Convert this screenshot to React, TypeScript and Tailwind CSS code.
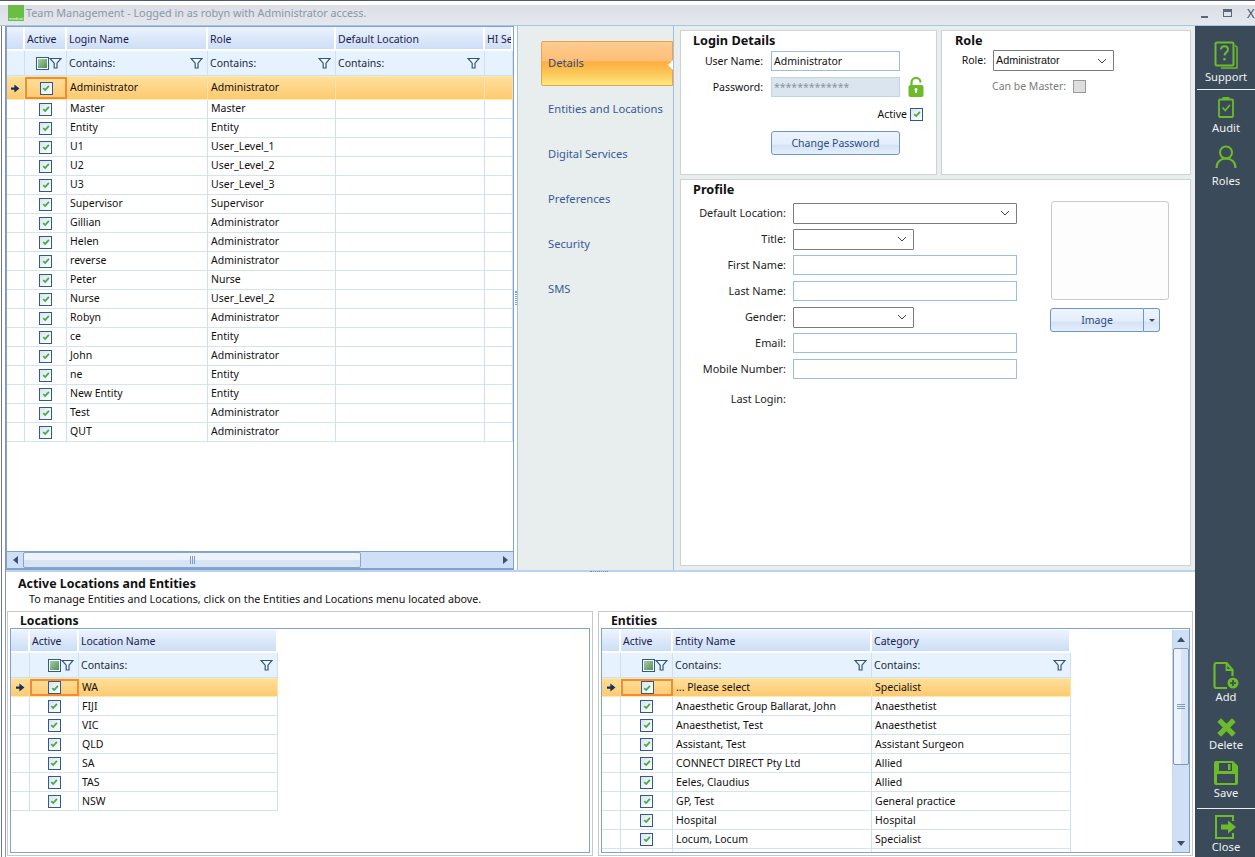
import type { ReactNode } from "react"

type Column = { label: string; width: number; filter?: boolean; tri?: boolean }

const teamColumns: Column[] = [
	{ label: "Active", width: 42, tri: true },
	{ label: "Login Name", width: 141, filter: true },
	{ label: "Role", width: 128, filter: true },
	{ label: "Default Location", width: 149, filter: true },
	{ label: "HI Se", width: 28 },
]

const teamRows = [
	["Administrator", "Administrator"],
	["Master", "Master"],
	["Entity", "Entity"],
	["U1", "User_Level_1"],
	["U2", "User_Level_2"],
	["U3", "User_Level_3"],
	["Supervisor", "Supervisor"],
	["Gillian", "Administrator"],
	["Helen", "Administrator"],
	["reverse", "Administrator"],
	["Peter", "Nurse"],
	["Nurse", "User_Level_2"],
	["Robyn", "Administrator"],
	["ce", "Entity"],
	["John", "Administrator"],
	["ne", "Entity"],
	["New Entity", "Entity"],
	["Test", "Administrator"],
	["QUT", "Administrator"],
]

const locationRows = ["WA", "FIJI", "VIC", "QLD", "SA", "TAS", "NSW"].map((l) => [l])

const entityRows = [
	["... Please select", "Specialist"],
	["Anaesthetic Group Ballarat, John", "Anaesthetist"],
	["Anaesthetist, Test", "Anaesthetist"],
	["Assistant, Test", "Assistant Surgeon"],
	["CONNECT DIRECT Pty Ltd", "Allied"],
	["Eeles, Claudius", "Allied"],
	["GP, Test", "General practice"],
	["Hospital", "Hospital"],
	["Locum, Locum", "Specialist"],
	["", ""],
]

function Funnel({ className = "" }: { className?: string }) {
	return (
		<svg viewBox="0 0 13 12" className={`h-[12px] w-[13px] shrink-0 ${className}`}>
			<path
				d="M1 1.500h11L8 6.200v4.800H5.200V6.200z"
				fill="#f4f8fd"
				stroke="#2f5480"
				strokeWidth="1.200"
			/>
		</svg>
	)
}

function CheckBox() {
	return (
		<span className="flex h-[13px] w-[13px] shrink-0 items-center justify-center border border-[#2f5b8c] bg-gradient-to-br from-[#dde3eb] to-[#ffffff]">
			<svg viewBox="0 0 10 10" className="h-[8px] w-[8px]">
				<path d="M1.500 5.200 4 7.600 8.600 2.400" fill="none" stroke="#3fae49" strokeWidth="2.200" />
			</svg>
		</span>
	)
}

function TriBox() {
	return (
		<span className="flex h-[13px] w-[13px] shrink-0 items-center justify-center border border-[#2f5b8c] bg-white">
			<span className="h-[9px] w-[9px] bg-gradient-to-br from-[#a9cda6] to-[#4f9150]" />
		</span>
	)
}

function Arrow() {
	return (
		<svg viewBox="0 0 8 8" className="h-[9px] w-[9px]">
			<path d="M0 3h3V0.500L7.500 4 3 7.500V5H0z" fill="#17305f" />
		</svg>
	)
}

function Grid({
	columns,
	rows,
	headH,
	headPt,
	filterH,
	firstH,
	indW,
	firstPb,
	rowPb,
}: {
	columns: Column[]
	rows: string[][]
	headH: string
	headPt: string
	filterH: string
	firstH: string
	indW: string
	firstPb: string
	rowPb: string
}) {
	return (
		<div className="flex w-fit shrink-0 flex-col text-[10.500px]">
			<div className={`flex ${headH} shrink-0 bg-gradient-to-b from-[#ecf3fd] to-[#c9dcf6]`}>
				<div className={`${indW} shrink-0 border-r-2 border-b-2 border-white`} />
				{columns.map((c) => (
					<div
						key={c.label}
						style={{ width: c.width }}
						className={`flex shrink-0 items-center overflow-hidden whitespace-nowrap border-r-2 border-b-2 border-white ${headPt} pl-[2px] text-[#201a4d]`}
					>
						{c.label}
					</div>
				))}
			</div>
			<div className={`flex ${filterH} shrink-0 border-b border-[#cfe0f5] bg-[#e6f2fe]`}>
				<div className={`${indW} shrink-0 border-r border-[#cfe0f5]`} />
				{columns.map((c) => (
					<div
						key={c.label}
						style={{ width: c.width }}
						className="flex shrink-0 items-center justify-between border-r border-[#cfe0f5] pr-[4px] pl-[2px] text-[#1c2a40]"
					>
						{c.tri ? (
							<div className="ml-auto flex items-center">
								<TriBox />
								<Funnel />
							</div>
						) : c.filter ? (
							<>
								<span>Contains:</span>
								<Funnel />
							</>
						) : null}
					</div>
				))}
			</div>
			{rows.map((row, i) => (
				<div
					key={i}
					className={`flex shrink-0 ${
						i === 0
							? `${firstH} border-y border-[#fdeaa8] bg-gradient-to-b from-[#fedf9a] to-[#fdca70]`
							: "h-[19px] border-b border-[#d5e2f2]"
					}`}
				>
					<div
						className={`${indW} flex shrink-0 items-center justify-center border-r ${
							i === 0 ? "border-[#fde3a4]" : "border-[#cfe0f5]"
						}`}
					>
						{i === 0 ? <Arrow /> : null}
					</div>
					{columns.map((c, n) => (
						<div
							key={c.label}
							style={{ width: c.width }}
							className={`flex shrink-0 items-center overflow-hidden whitespace-nowrap ${
								n === 0
									? i === 0
										? "justify-center border-2 border-[#f58b30]"
										: "justify-center border-r border-[#cfe0f5]"
									: `border-r ${i === 0 ? firstPb : rowPb} pl-[3px] ${i === 0 ? "border-[#fde3a4]" : "border-[#cfe0f5]"}`
							}`}
						>
							{n === 0 ? row[0] !== "" ? <CheckBox /> : null : row[n - 1]}
						</div>
					))}
				</div>
			))}
		</div>
	)
}

function NavItem({ label, active }: { label: string; active?: boolean }) {
	if (active) {
		return (
			<div className="relative mb-[1px] flex h-[45px] items-center rounded-l-[2px] border border-[#f0a04e] bg-[linear-gradient(#fecb8d_0%,#fdbf78_44%,#fdae3d_46%,#fdc95c_75%,#fdeb80_100%)] pb-[2px] pl-[6px] text-[#2e4a86]">
				{label}
				<span className="absolute top-[18px] -right-[1px] h-0 w-0 border-y-[5px] border-r-[5px] border-y-transparent border-r-white" />
			</div>
		)
	}
	return <div className="flex h-[45px] items-center pb-[2px] pl-[7px] text-[#3a5a96]">{label}</div>
}

function Button({ label, className = "" }: { label: string; className?: string }) {
	return (
		<div
			className={`flex items-center justify-center rounded-[3px] border border-[#6f96c8] bg-[linear-gradient(#edf4fd_0%,#e4eefb_55%,#d3e2f5_60%,#e6effb_100%)] text-[10.500px] text-[#2a4a86] ${className}`}
		>
			{label}
		</div>
	)
}

function Combo({ value, width }: { value?: string; width: string }) {
	return (
		<div className={`flex h-[21px] ${width} items-center justify-between rounded-[1px] border border-[#7c7c7c] bg-white pr-[6px] pl-[2px]`}>
			<span className="font-['Liberation_Sans',sans-serif] text-[10.800px] text-[#111]">{value}</span>
			<svg viewBox="0 0 10 6" className="h-[6px] w-[10px]">
				<path d="M1 1l4 4 4-4" fill="none" stroke="#444" strokeWidth="1" />
			</svg>
		</div>
	)
}

function Field({ label, children }: { label: string; children?: ReactNode }) {
	return (
		<div className="flex h-[26px] items-center">
			<div className="w-[112px] shrink-0 pr-[7px] text-right text-[10.900px] whitespace-nowrap text-[#222]">{label}</div>
			{children}
		</div>
	)
}

function TextBox() {
	return <div className="h-[20px] w-[224px] border border-[#9dbce4] bg-white" />
}

function SideItem({ label, icon, h }: { label: string; icon: ReactNode; h: string }) {
	return (
		<div className={`flex ${h} flex-col items-center justify-end text-[11.200px] leading-[14px] text-[#f0f3f5]`}>
			{icon}
			<span>{label}</span>
		</div>
	)
}

const green = "#6cbb2b"

function SupportIcon() {
	return (
		<svg viewBox="0 0 24 28" className="mb-[1px] h-[28px] w-[24px]" fill="none" stroke={green} strokeWidth="2">
			<path d="M21 4.500 23 6v21H7" strokeWidth="1.500" />
			<rect x="1.500" y="1.500" width="18" height="23" rx="1.500" />
			<path d="M7 8.500c0-4.500 7-4.500 7 0 0 3-3.500 2.800-3.500 6" strokeWidth="2" />
			<path d="M10.500 17v2.500" strokeWidth="2.200" />
		</svg>
	)
}

function AuditIcon() {
	return (
		<svg viewBox="0 0 16 21" className="mb-[3px] h-[21px] w-[16px]" fill="none" stroke={green} strokeWidth="1.800">
			<rect x="1" y="2.500" width="14" height="17.500" rx="1" />
			<path d="M5.500 2.500V1h5v1.500" />
			<path d="M4.500 10.500 7.300 13.500 11.800 8" />
		</svg>
	)
}

function RolesIcon() {
	return (
		<svg viewBox="0 0 22 24" className="mb-[5px] h-[24px] w-[22px]" fill="none" stroke={green} strokeWidth="2">
			<circle cx="11" cy="7.500" r="6" />
			<path d="M1.500 23c0-6 4-9.500 9.500-9.500S20.500 17 20.500 23" />
		</svg>
	)
}

function AddIcon() {
	return (
		<svg viewBox="0 0 26 28" className="h-[28px] w-[26px]" fill="none" stroke={green} strokeWidth="2.200">
			<path d="M14 26H3.500a2 2 0 0 1-2-2V3a2 2 0 0 1 2-2h10l6 7v6" />
			<path d="M13.500 1v7h6" strokeWidth="1.800" />
			<circle cx="20" cy="21" r="5.500" fill={green} stroke="none" />
			<path d="M20 18v6M17 21h6" stroke="#3a4a58" strokeWidth="1.600" />
		</svg>
	)
}

function DeleteIcon() {
	return (
		<svg viewBox="0 0 20 20" className="h-[21px] w-[21px]">
			<path d="M3 3l14 14M17 3 3 17" fill="none" stroke={green} strokeWidth="5" />
		</svg>
	)
}

function SaveIcon() {
	return (
		<svg viewBox="0 0 26 26" className="h-[26px] w-[26px]">
			<path d="M3 1h17l5 5v17a2 2 0 0 1-2 2H3a2 2 0 0 1-2-2V3a2 2 0 0 1 2-2z" fill={green} />
			<rect x="6" y="3" width="13" height="8" fill="#3a4a58" />
			<rect x="15" y="4" width="2.500" height="6" fill={green} />
			<rect x="4" y="14" width="18" height="9" fill="#3a4a58" />
		</svg>
	)
}

function CloseIcon() {
	return (
		<svg viewBox="0 0 24 26" className="h-[26px] w-[24px]" fill="none" stroke={green} strokeWidth="2">
			<path d="M19 7V2H2v22h17v-5" />
			<path d="M7 10.500h7V6.500l8 6.500-8 6.500v-4H7z" fill={green} stroke="none" />
		</svg>
	)
}

function LockIcon() {
	return (
		<svg viewBox="0 0 16 20" className="h-[20px] w-[16px]">
			<path d="M3.500 8V5.500a4.500 4.500 0 0 1 9 0" fill="none" stroke="#6cbb2b" strokeWidth="2.200" />
			<rect x="0.500" y="8" width="15" height="12" rx="2" fill="#6cbb2b" />
			<rect x="7" y="12" width="2" height="4" fill="#fff" />
			<circle cx="8" cy="12.500" r="1.500" fill="#fff" />
		</svg>
	)
}

function ScrollH() {
	return (
		<div className="flex h-[18px] items-center border-y border-[#7fa2d0] bg-[#cfdff5] text-[#2c4770]">
			<div className="flex w-[16px] items-center justify-center">
				<span className="h-0 w-0 border-y-[4px] border-r-[5px] border-y-transparent border-r-[#3d4f6d]" />
			</div>
			<div className="flex h-[16px] w-[338px] items-center justify-center rounded-[2px] border border-[#8aa5c8] bg-[linear-gradient(#edf3fc_0%,#edf3fc_50%,#d7e4f5_50%,#d7e4f5_100%)]">
				<span className="h-[8px] w-[5px] border-x border-[#7f9dc5] bg-[linear-gradient(90deg,transparent_40%,#7f9dc5_40%,#7f9dc5_60%,transparent_60%)]" />
			</div>
			<div className="flex-1" />
			<div className="flex w-[16px] items-center justify-center">
				<span className="h-0 w-0 border-y-[4px] border-l-[5px] border-y-transparent border-l-[#3d4f6d]" />
			</div>
		</div>
	)
}

function ScrollV() {
	return (
		<div className="flex h-full w-[17px] shrink-0 flex-col items-center border-l border-[#c4d6ee] bg-[#cfdff5]">
			<div className="flex h-[18px] items-center">
				<span className="h-0 w-0 border-x-[4px] border-b-[5px] border-x-transparent border-b-[#3d4f6d]" />
			</div>
			<div className="flex h-[117px] w-[16px] flex-col items-center justify-center gap-[1px] rounded-[2px] border border-[#7f96b8] bg-[linear-gradient(90deg,#edf3fc_0%,#edf3fc_50%,#d7e4f5_50%,#d7e4f5_100%)]">
				<span className="h-[1px] w-[8px] bg-[#7f9dc5]" />
				<span className="h-[1px] w-[8px] bg-[#7f9dc5]" />
				<span className="h-[1px] w-[8px] bg-[#7f9dc5]" />
			</div>
			<div className="flex-1" />
			<div className="flex h-[18px] items-center">
				<span className="h-0 w-0 border-x-[4px] border-t-[5px] border-x-transparent border-t-[#3d4f6d]" />
			</div>
		</div>
	)
}

export default function App() {
	return (
		<div className="flex h-[857px] w-[1255px] flex-col overflow-hidden bg-white font-['Noto_Sans','Open_Sans',sans-serif] text-[10.500px] leading-none text-[#111]">
			<div className="flex h-[26px] shrink-0 flex-col">
				<div className="h-[1px] bg-[#4d5874]" />
				<div className="h-[6px] bg-white" />
				<div className="flex flex-1 items-center border-b border-[#a9c4e6] bg-gradient-to-b from-[#dcdfe6] to-[#e4e7ec] pb-[4px] pl-[8px] text-[10.800px] text-[#8b98a8]">
					<div className="mr-[2px] flex h-[16px] w-[16px] items-end justify-center bg-[#6abd45] text-[4px] text-white">
						medical
					</div>
					<span>Team Management - Logged in as robyn with Administrator access.</span>
					<div className="ml-auto flex items-center gap-[15px] text-[#4a5568]">
						<span className="mt-[8px] h-[2px] w-[7px] bg-[#5c6778]" />
						<span className="h-[8px] w-[9px] border border-t-[3px] border-[#5c6778]" />
						<span className="w-[8px] text-[13px]">X</span>
					</div>
				</div>
			</div>

			<div className="flex min-h-0 flex-1">
				<div className="ml-[1px] w-[4px] shrink-0 border-l border-[#6b7890]" />
				<div className="flex min-w-0 flex-1 flex-col border-l border-[#8a96a8]">
					<div className="flex h-[544px] shrink-0">
						<div className="flex w-[508px] shrink-0 flex-col justify-between border border-[#7fa2d0]">
							<Grid columns={teamColumns} rows={teamRows} headH="h-[24px]" headPt="pt-[3px]" filterH="h-[25px]" firstH="h-[24px]" indW="w-[18px]" firstPb="pb-[2px]" rowPb="pb-[2px]" />
							<ScrollH />
						</div>
						<div className="flex w-[3px] shrink-0 items-center justify-center bg-white">
							<span className="h-[14px] w-[2px] border-x border-dotted border-[#7fa2d0]" />
						</div>
						<div className="w-[157px] shrink-0 border-r border-l border-[#a5bfdf] bg-[#e8edee] pt-[15px] pl-[23px] text-[11.200px]">
							<NavItem label="Details" active />
							<NavItem label="Entities and Locations" />
							<NavItem label="Digital Services" />
							<NavItem label="Preferences" />
							<NavItem label="Security" />
							<NavItem label="SMS" />
						</div>
						<div className="flex w-[521px] shrink-0 flex-col gap-[4px] bg-[#e8edee] pt-[4px] pr-[4px] pb-[4px] pl-[6px]">
							<div className="flex h-[145px] gap-[4px]">
								<div className="relative w-[257px] border border-[#cfd3d3] bg-white pt-[2px]">
									<div className="pl-[12px] text-[12.700px] leading-[14px] font-bold">Login Details</div>
									<div className="mt-[4px] flex h-[20px] items-center">
										<div className="w-[90px] pr-[8px] text-right">User Name:</div>
										<div className="flex h-[20px] w-[129px] items-center border border-[#9dbce4] pl-[2px]">Administrator</div>
									</div>
									<div className="mt-[6px] flex h-[20px] items-center">
										<div className="w-[90px] pr-[8px] text-right">Password:</div>
										<div className="flex h-[20px] w-[129px] items-center border border-[#c5d3e2] bg-[#dbe5ef] pl-[2px] text-[#8a949e]">*************</div>
										<div className="ml-[8px]">
											<LockIcon />
										</div>
									</div>
									<div className="mt-[9px] flex h-[16px] items-center justify-end gap-[3px] pr-[13px]">
										<span>Active</span>
										<CheckBox />
									</div>
									<div className="mt-[9px] pl-[90px]">
										<Button label="Change Password" className="h-[24px] w-[129px]" />
									</div>
								</div>
								<div className="w-[250px] border border-[#cfd3d3] bg-white pt-[2px]">
									<div className="pl-[13px] text-[12.700px] leading-[14px] font-bold">Role</div>
									<div className="mt-[3px] flex h-[21px] items-center">
										<div className="w-[51px] pr-[7px] text-right">Role:</div>
										<Combo value="Administrator" width="w-[121px]" />
									</div>
									<div className="mt-[7px] flex h-[16px] items-center pl-[50px] text-[#7b7b7b]">
										<span>Can be Master:</span>
										<span className="ml-[7px] h-[13px] w-[13px] border border-[#9a9a9a] bg-[#dedede]" />
									</div>
								</div>
							</div>
							<div className="relative flex-1 border border-[#cfd3d3] bg-white pt-[2px]">
								<div className="pl-[12px] text-[12.700px] leading-[14px] font-bold">Profile</div>
								<div className="flex">
									<div className="w-[370px] pt-[4px]">
										<Field label="Default Location:"><Combo width="w-[224px]" /></Field>
										<Field label="Title:"><Combo width="w-[121px]" /></Field>
										<Field label="First Name:"><TextBox /></Field>
										<Field label="Last Name:"><TextBox /></Field>
										<Field label="Gender:"><Combo width="w-[121px]" /></Field>
										<Field label="Email:"><TextBox /></Field>
										<Field label="Mobile Number:"><TextBox /></Field>
										<div className="mt-[4px]">
											<Field label="Last Login:" />
										</div>
									</div>
									<div className="pt-[5px]">
										<div className="h-[99px] w-[118px] rounded-[3px] border border-[#cbcbcb] bg-[#fdfdfd]" />
										<div className="mt-[8px] -ml-[1px] flex h-[24px] w-[110px]">
											<Button label="Image" className="w-[94px] rounded-r-none" />
											<div className="flex w-[16px] items-center justify-center rounded-r-[3px] border border-l-0 border-[#6f96c8] bg-[linear-gradient(#edf4fd_0%,#e4eefb_55%,#d3e2f5_60%,#e6effb_100%)]">
												<span className="h-0 w-0 border-x-[3px] border-t-[3px] border-x-transparent border-t-[#33507a]" />
											</div>
										</div>
									</div>
								</div>
							</div>
						</div>
					</div>

					<div className="relative flex flex-1 flex-col border-t-2 border-[#bcd2ee] pl-[1px]">
						<span className="absolute -top-[1px] left-[584px] h-0 w-[18px] border-t border-dotted border-[#6f8fb8]" />
						<div className="mt-[5px] pl-[11px] text-[12.400px] leading-[14px] font-bold">Active Locations and Entities</div>
						<div className="mt-[2px] pl-[22px] text-[10.740px] leading-[12px]">To manage Entities and Locations, click on the Entities and Locations menu located above.</div>
						<div className="mt-[6px] flex flex-1 gap-[5px]">
							<div className="flex h-[245px] w-[586px] shrink-0 flex-col border border-[#c8c8c8] bg-white px-[2px] pb-[2px]">
								<div className="h-[16px] pt-[2px] pl-[10px] text-[12.200px] leading-[14px] font-bold">Locations</div>
								<div className="flex-1 border border-[#7fa2d0] pt-[1px]">
									<Grid
										columns={[
											{ label: "Active", width: 49, tri: true },
											{ label: "Location Name", width: 199, filter: true },
										]}
										rows={locationRows}
										headH="h-[23px]"
										headPt="pt-[1px]"
										filterH="h-[25px]"
										firstH="h-[19px]"
										indW="w-[19px]"
										firstPb="pb-[1px]"
										rowPb=""
									/>
								</div>
							</div>
							<div className="flex h-[245px] w-[595px] shrink-0 flex-col border border-[#c8c8c8] bg-white px-[2px] pb-[2px]">
								<div className="h-[16px] pt-[2px] pl-[10px] text-[12.200px] leading-[14px] font-bold">Entities</div>
								<div className="flex flex-1 justify-between overflow-hidden border border-[#7fa2d0] pt-[1px]">
									<Grid
										columns={[
											{ label: "Active", width: 52, tri: true },
											{ label: "Entity Name", width: 199, filter: true },
											{ label: "Category", width: 199, filter: true },
										]}
										rows={entityRows}
										headH="h-[23px]"
										headPt="pt-[1px]"
										filterH="h-[25px]"
										firstH="h-[19px]"
										indW="w-[19px]"
										firstPb="pb-[1px]"
										rowPb=""
									/>
									<ScrollV />
								</div>
							</div>
						</div>
					</div>
				</div>

				<div className="flex w-[60px] shrink-0 flex-col bg-[#3a4a58] pl-[2px]">
					<div className="h-[64px] border-b border-[#e8eef2]">
						<SideItem label="Support" icon={<SupportIcon />} h="h-[58px]" />
					</div>
					<SideItem label="Audit" icon={<AuditIcon />} h="h-[45px]" />
					<SideItem label="Roles" icon={<RolesIcon />} h="h-[53px]" />
					<div className="flex-1" />
					<SideItem label="Add" icon={<AddIcon />} h="h-[42px]" />
					<SideItem label="Delete" icon={<DeleteIcon />} h="h-[48px]" />
					<SideItem label="Save" icon={<SaveIcon />} h="h-[48px]" />
					<div className="mt-[8px] h-[1px] bg-[#e8eef2]" />
					<SideItem label="Close" icon={<CloseIcon />} h="h-[45px]" />
					<div className="h-[3px]" />
				</div>
			</div>
		</div>
	)
}
